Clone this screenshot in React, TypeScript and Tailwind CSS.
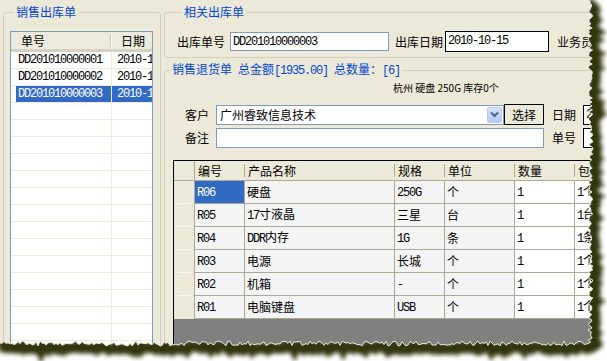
import React from "react";

const mono = "font-['Liberation_Mono',monospace] text-[12px] tracking-[-1.2px] whitespace-pre";

function M({ t, className = "" }: { t: string; className?: string }) {
  const parts = t.match(/[\x20-\x7e]+|[^\x20-\x7e]+/g) ?? [];
  return (
    <span className={`whitespace-nowrap ${className}`}>
      {parts.map((p, i) =>
        /^[\x20-\x7e]/.test(p) ? (
          <span key={i} className={mono}>
            {p}
          </span>
        ) : (
          <span key={i}>{p}</span>
        )
      )}
    </span>
  );
}

const listRows = ["DD201010000001", "DD201010000002", "DD201010000003"];

const rows = [
  ["R06", "硬盘", "250G", "个", "1", "1个"],
  ["R05", "17寸液晶", "三星", "台", "1", "1台"],
  ["R04", "DDR内存", "1G", "条", "1", "1条"],
  ["R03", "电源", "长城", "个", "1", "1个"],
  ["R02", "机箱", "-", "个", "1", "1个"],
  ["R01", "电脑键盘", "USB", "个", "1", "1个"],
];

function Tear() {
  let s = 98765;
  const rand = () => {
    s = (s * 16807) % 2147483647;
    return s / 2147483647;
  };
  const pts: string[] = [];
  for (let y = -2; y <= 342; y += 2) pts.push(`${(588 + rand() * 5).toFixed(1)},${y}`);
  for (let x = 588; x >= -4; x -= 2) pts.push(`${x},${(341 + rand() * 5).toFixed(1)}`);
  const line = pts.join(" ");
  const outside = `M609,-2 L${pts.join(" L")} L-4,363 L609,363 Z`;
  return (
    <svg className="absolute left-0 top-0 pointer-events-none" width="607" height="361">
      <defs>
        <clipPath id="tearOut">
          <path d={outside} />
        </clipPath>
        <filter id="tearBlur" x="-20%" y="-20%" width="140%" height="140%">
          <feGaussianBlur stdDeviation="2.2" />
        </filter>
      </defs>
      <path d={outside} fill="#ffffff" />
      <g clipPath="url(#tearOut)">
        <polyline
          points={line}
          fill="none"
          stroke="#33350c"
          strokeWidth="11"
          transform="translate(3,4)"
          filter="url(#tearBlur)"
        />
      </g>
      <polyline points={line} fill="none" stroke="#e4e4dc" strokeWidth="1" />
    </svg>
  );
}

function HeaderSep() {
  return <div className="w-[2px] h-[13px] shrink-0 border-l border-[#C7C5B2] border-r border-r-white" />;
}

const lbl = "shrink-0 whitespace-nowrap";

export default function App() {
  return (
    <div className="relative w-[607px] h-[361px] overflow-hidden bg-[#ECE9D8] text-black font-['Noto_Sans_CJK_SC',sans-serif] text-[12px] leading-[14px]">
      <div className="flex">
        {/* Left group */}
        <fieldset className="ml-[3px] mt-[5px] w-[158px] h-[420px] shrink-0 border border-[#D0D0BF] rounded-[3px] px-[6px] pt-[12px]">
          <legend className="ml-[4px] px-[2px] text-[#0046D5] leading-[14px]">销售出库单</legend>
          <div className="w-[143px] h-[400px] border border-[#7F9DB9] bg-white overflow-hidden">
            <div className="flex items-center h-[20px] bg-[#EBEADB] border-b-[3px] border-[#D6D2C2]">
              <div className="w-[99px] shrink-0 pl-[10px]">单号</div>
              <HeaderSep />
              <div className="pl-[9px] whitespace-nowrap">日期</div>
            </div>
            {Array.from({ length: 20 }).map((_, i) => {
              const t = listRows[i];
              const sel = i === 2;
              return (
                <div key={i} className="flex h-[17px] border-b border-[#EEEBDD]">
                  <div className="w-[101px] shrink-0 flex border-r border-[#EEEBDD] pl-[5px]">
                    <div
                      className={`flex-1 flex items-center pl-[2px] overflow-hidden ${
                        sel ? "bg-[#316AC5] text-white" : ""
                      }`}
                    >
                      {t && <span className={mono}>{t}</span>}
                    </div>
                  </div>
                  <div
                    className={`flex-1 min-w-0 overflow-hidden flex items-center pl-[5px] ${
                      sel ? "bg-[#316AC5] text-white" : ""
                    }`}
                  >
                    {t && <span className={mono}>2010-10-15</span>}
                  </div>
                </div>
              );
            })}
          </div>
        </fieldset>

        {/* Right column */}
        <div className="ml-[3px] w-[470px] shrink-0 flex flex-col">
          <fieldset className="mt-[5px] border border-[#D0D0BF] rounded-[3px] pl-[12px] pt-[12px] pb-[5px]">
            <legend className="ml-[5px] px-[2px] text-[#0046D5] leading-[14px]">相关出库单</legend>
            <div className="flex items-center h-[21px]">
              <span className={lbl}>出库单号</span>
              <div className="ml-[5px] w-[159px] h-[19px] shrink-0 border border-[#7F9DB9] bg-white flex items-center pl-[2px]">
                <span className={mono}>DD201010000003</span>
              </div>
              <span className={`ml-[6px] ${lbl}`}>出库日期</span>
              <div className="ml-[2px] w-[104px] h-[21px] shrink-0 border border-black bg-white flex items-start pt-[2px] pl-[2px]">
                <span className={mono}>2010-10-15</span>
              </div>
              <span className={`ml-[8px] ${lbl}`}>业务员</span>
            </div>
          </fieldset>

          <fieldset className="mt-[4px] h-[400px] border border-[#D0D0BF] rounded-[3px] pt-[3px]">
            <legend className="ml-[5px] px-[2px] text-[#0046D5] leading-[14px] whitespace-nowrap">
              <M t="销售退货单 总金额[1935.00] 总数量：[6]" />
            </legend>
            <div className="ml-[228px] text-[10px] leading-[14px] whitespace-nowrap">杭州 硬盘 250G 库存0个</div>

            <div className="mt-[9px] flex items-center h-[21px] pl-[20px]">
              <span className={lbl}>客户</span>
              <div className="ml-[7px] w-[288px] h-[20px] shrink-0 border border-[#7F9DB9] bg-white flex items-center pl-[3px] pr-px">
                <span className="flex-1 whitespace-nowrap">广州睿致信息技术</span>
                <div className="w-[15px] h-[16px] rounded-[2px] border border-[#B9CBF3] bg-gradient-to-b from-[#D6E1FC] to-[#B4C9F5] flex items-center justify-center">
                  <svg width="9" height="7" viewBox="0 0 9 7">
                    <path d="M1 1.5 L4.5 5 L8 1.5" fill="none" stroke="#4D6185" strokeWidth="2" />
                  </svg>
                </div>
              </div>
              <div className="w-[40px] h-[21px] shrink-0 border border-black bg-[#ECE9D8] flex items-center justify-center">
                选择
              </div>
              <span className={`ml-[8px] ${lbl}`}>日期</span>
              <div className="ml-[7px] w-[80px] h-[20px] shrink-0 border border-black bg-white flex items-center pl-[2px]">
                <span className={mono}>2010-10-15</span>
              </div>
            </div>

            <div className="mt-[3px] flex items-center h-[20px] pl-[20px]">
              <span className={lbl}>备注</span>
              <div className="ml-[7px] w-[328px] h-[20px] shrink-0 border border-[#7F9DB9] bg-white" />
              <span className={`ml-[8px] ${lbl}`}>单号</span>
              <div className="ml-[7px] w-[80px] h-[20px] shrink-0 border border-black bg-white" />
            </div>

            <div className="mt-[12px] ml-[8px] h-[300px] border-l border-t border-black bg-[#808080] overflow-hidden">
              <div className="flex h-[20px] bg-[#ECE9D8] border-b border-[#ACA899]">
                <div className="w-[21px] shrink-0 border-r border-[#ACA899]" />
                {[
                  ["编号", "w-[50px]"],
                  ["产品名称", "w-[150px]"],
                  ["规格", "w-[50px]"],
                  ["单位", "w-[70px]"],
                  ["数量", "w-[60px]"],
                  ["包装", "w-[80px]"],
                ].map(([h, w]) => (
                  <div key={h} className={`flex items-center shrink-0 ${w}`}>
                    <span className="flex-1 pl-[3px] whitespace-nowrap">{h}</span>
                    <span className="w-px h-[13px] bg-[#ACA899]" />
                  </div>
                ))}
              </div>
              {rows.map((r, i) => (
                <div key={i} className="flex h-[23px]">
                  <div className="w-[21px] shrink-0 bg-[#ECE9D8] border-r border-[#ACA899] flex flex-col justify-end items-center">
                    {i < rows.length - 1 && <span className="w-[13px] h-px bg-[#F8F7F1]" />}
                  </div>
                  <div
                    className={`w-[50px] shrink-0 border-r border-b border-[#ACA899] flex items-center pl-[2px] ${
                      i === 0 ? "bg-[#316AC5] text-white" : "bg-[#F4F4F4]"
                    }`}
                  >
                    <M t={r[0]} />
                  </div>
                  <div className="w-[150px] shrink-0 border-r border-b border-[#ACA899] bg-[#F4F4F4] flex items-center pl-[2px]">
                    <M t={r[1]} />
                  </div>
                  <div className="w-[50px] shrink-0 border-r border-b border-[#ACA899] bg-[#F4F4F4] flex items-center pl-[2px]">
                    <M t={r[2]} />
                  </div>
                  <div className="w-[70px] shrink-0 border-r border-b border-[#ACA899] bg-[#F4F4F4] flex items-center pl-[2px]">
                    <M t={r[3]} />
                  </div>
                  <div className="w-[60px] shrink-0 border-r border-b border-[#ACA899] bg-white flex items-center pl-[2px]">
                    <M t={r[4]} />
                  </div>
                  <div className="w-[80px] shrink-0 border-r border-b border-[#ACA899] bg-white flex items-center pl-[2px]">
                    <M t={r[5]} />
                  </div>
                </div>
              ))}
            </div>
          </fieldset>
        </div>
      </div>
      <Tear />
    </div>
  );
}
